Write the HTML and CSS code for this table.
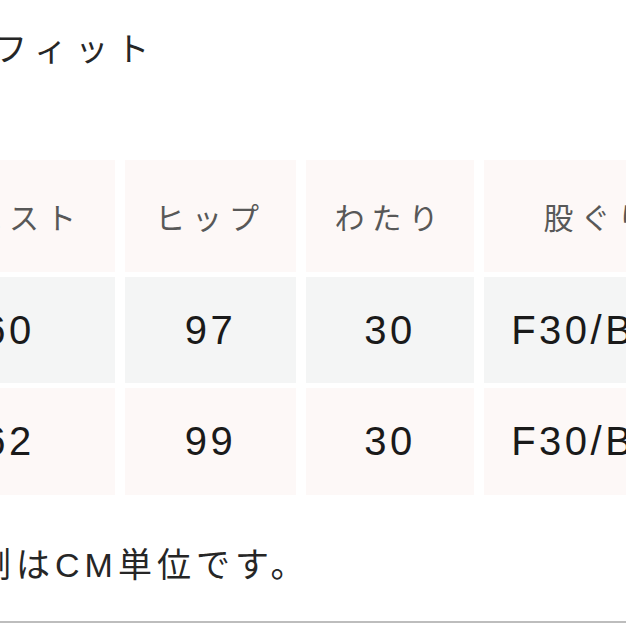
FILE: index.html
```html
<!DOCTYPE html>
<html lang="ja">
<head>
<meta charset="utf-8">
<title>サイズ表</title>
<link rel="stylesheet" href="styles.css">
</head>
<body>
<div class="page">
  <div class="title">フィット</div>
  <div class="table">
    <div class="cell head">ウエスト</div>
    <div class="cell head">ヒップ</div>
    <div class="cell head">わたり</div>
    <div class="cell head">股ぐり</div>

    <div class="cell gray">60</div>
    <div class="cell gray">97</div>
    <div class="cell gray">30</div>
    <div class="cell gray">F30/B36</div>

    <div class="cell pink">62</div>
    <div class="cell pink">99</div>
    <div class="cell pink">30</div>
    <div class="cell pink">F30/B36</div>
  </div>
  <p class="note">計測はCM単位です。</p>
  <div class="rule"></div>
</div>
</body>
</html>
```
FILE: styles.css
```css
html, body {
  margin: 0;
  padding: 0;
  background: #ffffff;
}

.page {
  width: 626px;
  height: 626px;
  overflow: hidden;
  display: flex;
  flex-direction: column;
  font-family: "Liberation Sans", "Noto Sans CJK JP", sans-serif;
}

.title {
  padding-top: 29px;
  margin-left: -6px;
  font-size: 33px;
  line-height: 42px;
  letter-spacing: 8px;
  color: #262626;
  white-space: nowrap;
}

.table {
  margin-top: 89px;
  margin-left: -97px;
  display: grid;
  grid-template-columns: 212px 171px 168px 230px;
  grid-template-rows: 112px 106px 107px;
  column-gap: 10px;
  row-gap: 5px;
}

.cell {
  display: flex;
  align-items: center;
  justify-content: center;
  white-space: nowrap;
}

.head {
  background: #fdf8f7;
  color: #585858;
  font-size: 30px;
  letter-spacing: 7px;
}

.gray {
  background: #f4f5f5;
  color: #1a1a1a;
  font-size: 40px;
  letter-spacing: 3.5px;
}

.pink {
  background: #fdf8f7;
  color: #1a1a1a;
  font-size: 40px;
  letter-spacing: 3.5px;
}

.note {
  margin: 49px 0 0 -62px;
  font-size: 34px;
  line-height: 42px;
  letter-spacing: 5px;
  color: #262626;
  white-space: nowrap;
}

.rule {
  margin-top: 35px;
  height: 2px;
  background: #bdbdbd;
  flex-shrink: 0;
}
```
